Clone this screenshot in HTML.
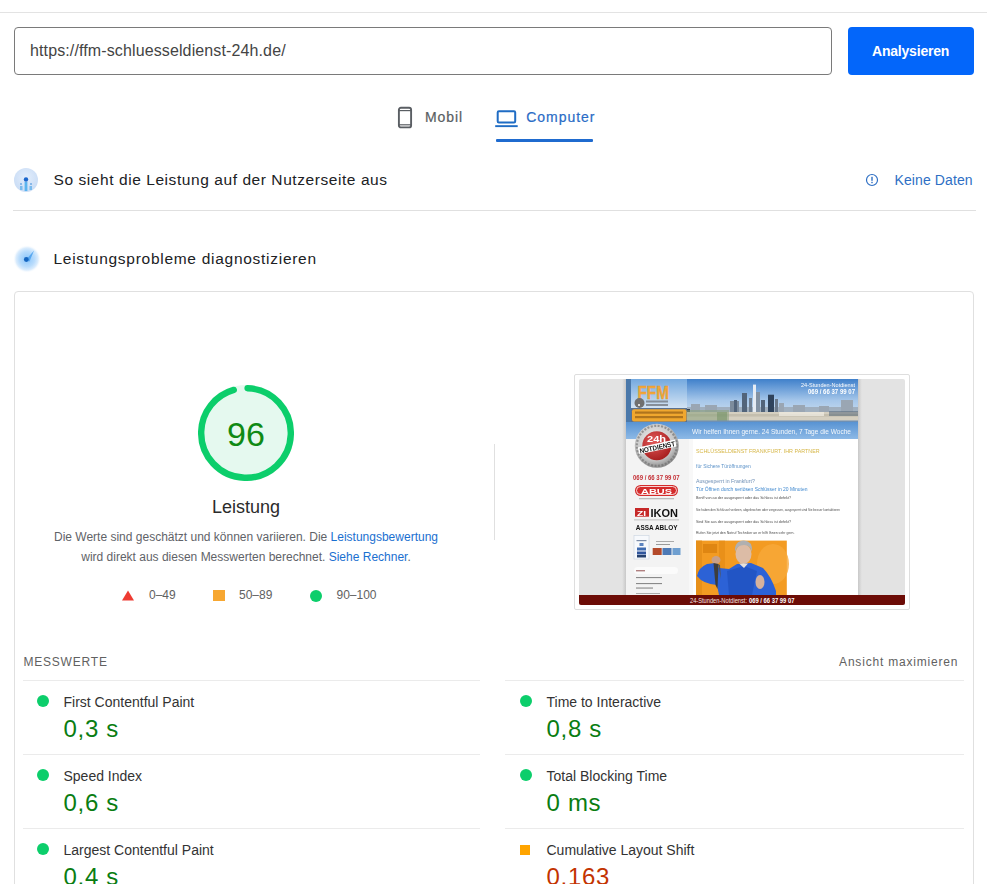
<!DOCTYPE html>
<html><head><meta charset="utf-8">
<style>
html,body{margin:0;padding:0;background:#fff;width:987px;height:884px;overflow:hidden;position:relative;font-family:"Liberation Sans",sans-serif;}
.a{position:absolute;white-space:nowrap;}
.t{position:absolute;white-space:nowrap;line-height:1;}
</style></head><body>
<!-- top line -->
<div class="a" style="left:0;top:12px;width:987px;height:1px;background:#e3e3e3"></div>
<!-- input -->
<div class="a" style="left:14px;top:27px;width:816px;height:46px;border:1px solid #7a7a7a;border-radius:4px;"></div>
<div class="t" style="left:30px;top:43.2px;font-size:16px;color:#444;letter-spacing:0.12px">https://ffm-schluesseldienst-24h.de/</div>
<!-- button -->
<div class="a" style="left:848px;top:27px;width:126px;height:48px;background:#0366fa;border-radius:4px;"></div>
<div class="t" style="left:872px;top:44.2px;font-size:14px;font-weight:bold;color:#fff;letter-spacing:-0.2px">Analysieren</div>

<!-- tabs -->
<svg class="a" style="left:397px;top:106px" width="16" height="23" viewBox="0 0 16 23">
 <rect x="1.9" y="1.8" width="12.2" height="19.6" rx="2" fill="none" stroke="#5a5e63" stroke-width="1.9"/>
 <line x1="2" y1="4.6" x2="14" y2="4.6" stroke="#5a5e63" stroke-width="1.2"/>
 <line x1="2" y1="18.8" x2="14" y2="18.8" stroke="#5a5e63" stroke-width="1.2"/>
</svg>
<div class="t" style="left:425px;top:110.4px;font-size:14px;color:#595d62;letter-spacing:0.9px;-webkit-text-stroke:0.2px #595d62">Mobil</div>
<svg class="a" style="left:494px;top:108px" width="26" height="20" viewBox="0 0 26 20">
 <rect x="3.7" y="3.2" width="17.5" height="11.2" rx="1.2" fill="none" stroke="#1f6cc4" stroke-width="2"/>
 <rect x="1.2" y="17.2" width="22.5" height="1.9" fill="#1f6cc4"/>
</svg>
<div class="t" style="left:526.3px;top:110.4px;font-size:14px;color:#2a6cc6;letter-spacing:0.95px;-webkit-text-stroke:0.2px #2a6cc6">Computer</div>
<div class="a" style="left:496px;top:139px;width:97px;height:3px;background:#1f6bcf;border-radius:1px"></div>

<!-- section 1 -->
<svg class="a" style="left:14px;top:168px" width="24" height="24" viewBox="0 0 24 24">
 <defs><radialGradient id="g1" cx="50%" cy="40%" r="60%"><stop offset="0" stop-color="#e3eefc"/><stop offset="1" stop-color="#c9dcf5"/></radialGradient></defs>
 <circle cx="12" cy="12" r="12" fill="url(#g1)"/>
 <circle cx="12" cy="11.5" r="2.2" fill="#1a66cc"/>
 <rect x="10.6" y="14" width="2.8" height="9" fill="#5ab4ef"/>
 <rect x="6" y="15" width="2" height="2" fill="#8ab8e8"/>
 <rect x="16" y="15" width="2" height="2" fill="#8ab8e8"/>
 <rect x="6" y="18" width="2.5" height="4" fill="#79bbee"/>
 <rect x="15.5" y="18" width="2.5" height="4" fill="#79bbee"/>
</svg>
<div class="t" style="left:53.5px;top:171.8px;font-size:15.5px;color:#202124;letter-spacing:0.57px">So sieht die Leistung auf der Nutzerseite aus</div>
<svg class="a" style="left:865px;top:173px" width="14" height="14" viewBox="0 0 14 14">
 <circle cx="7" cy="7" r="5.5" fill="none" stroke="#2e6fc4" stroke-width="1.2"/>
 <rect x="6.3" y="3.8" width="1.4" height="4" fill="#2e6fc4"/>
 <rect x="6.3" y="8.8" width="1.4" height="1.4" fill="#2e6fc4"/>
</svg>
<div class="t" style="left:894.5px;top:173.4px;font-size:14px;color:#2e6fc4;letter-spacing:0.1px">Keine Daten</div>
<div class="a" style="left:13px;top:210px;width:963px;height:1px;background:#e0e0e0"></div>

<!-- section 2 -->
<svg class="a" style="left:13px;top:245px" width="28" height="28" viewBox="0 0 28 28">
 <defs><radialGradient id="g2" cx="50%" cy="50%" r="50%"><stop offset="0" stop-color="#8cc6fa"/><stop offset="0.55" stop-color="#b9dcfc"/><stop offset="0.8" stop-color="#dcedfd"/><stop offset="1" stop-color="#ffffff" stop-opacity="0"/></radialGradient></defs>
 <circle cx="14" cy="14" r="14" fill="url(#g2)"/>
 <path d="M12.5 15.5 L21 5.5 L16.5 16.5 Z" fill="#58a8f0"/>
 <circle cx="13.3" cy="14.5" r="2.4" fill="#1565c0"/>
</svg>
<div class="t" style="left:53.5px;top:250.9px;font-size:15.5px;color:#202124;letter-spacing:0.72px">Leistungsprobleme diagnostizieren</div>

<!-- card -->
<div class="a" style="left:14px;top:291px;width:958px;height:700px;border:1px solid #e0e0e0;border-radius:4px;"></div>


<!-- gauge -->
<svg class="a" style="left:198px;top:385px" width="96" height="96" viewBox="0 0 120 120">
 <circle cx="60" cy="60" r="56" fill="#0cce6b" stroke="#0cce6b" stroke-width="8" opacity="0.1"/>
 <circle cx="60" cy="60" r="56" fill="none" stroke="#0cce6b" stroke-width="8" stroke-linecap="round" stroke-dasharray="333.78 351.86" transform="rotate(-87.954 60 60)"/>
</svg>
<div class="t" style="left:146px;width:200px;text-align:center;top:417.2px;font-size:34px;color:#108a14">96</div>
<div class="t" style="left:146px;width:200px;text-align:center;top:497.8px;font-size:18px;color:#2b2b2b">Leistung</div>
<div class="t" style="left:46px;width:400px;text-align:center;top:530.8px;font-size:12px;color:#5f6368">Die Werte sind geschätzt und können variieren. Die <span style="color:#1a6fd0">Leistungsbewertung</span></div>
<div class="t" style="left:46px;width:400px;text-align:center;top:550.8px;font-size:12px;color:#5f6368">wird direkt aus diesen Messwerten berechnet. <span style="color:#1a6fd0">Siehe Rechner</span>.</div>
<!-- legend -->
<svg class="a" style="left:122px;top:590px" width="12" height="11" viewBox="0 0 12 11"><path d="M6 0.5 L12 10.5 L0 10.5 Z" fill="#ee3b32"/></svg>
<div class="t" style="left:149px;top:589px;font-size:12px;color:#616161">0–49</div>
<div class="a" style="left:213px;top:590px;width:12px;height:11px;background:#f7a731"></div>
<div class="t" style="left:239px;top:589px;font-size:12px;color:#616161">50–89</div>
<div class="a" style="left:310px;top:589.5px;width:12px;height:12px;border-radius:50%;background:#0cce6b"></div>
<div class="t" style="left:336.5px;top:589px;font-size:12px;color:#616161">90–100</div>
<!-- vertical divider -->
<div class="a" style="left:494px;top:444px;width:1px;height:96px;background:#e0e0e0"></div>
<!-- thumbnail frame -->
<div class="a" style="left:574px;top:374px;width:334px;height:234px;border:1px solid #dedede;border-radius:2px;background:#fff"></div>
<div id="thumb" class="a" style="left:579px;top:379px;width:326px;height:226px;overflow:hidden;border-radius:2px;filter:blur(0.35px)"><svg width="326" height="226" viewBox="0 0 326 226" style="display:block;font-family:'Liberation Sans',sans-serif">
 <defs>
  <linearGradient id="sky" x1="0" y1="0" x2="0" y2="1"><stop offset="0" stop-color="#3f80cb"/><stop offset="0.5" stop-color="#a6c7ea"/><stop offset="1" stop-color="#dbe7f2"/></linearGradient>
  <linearGradient id="logo" x1="0" y1="0" x2="0" y2="1"><stop offset="0" stop-color="#74a9df"/><stop offset="1" stop-color="#d3e3f3"/></linearGradient>
  <linearGradient id="band" x1="0" y1="0" x2="0" y2="1"><stop offset="0" stop-color="#5893d3"/><stop offset="1" stop-color="#8db9e6"/></linearGradient>
  <linearGradient id="shL" x1="0" y1="0" x2="1" y2="0"><stop offset="0" stop-color="#e4e4e4"/><stop offset="1" stop-color="#c8c8c8"/></linearGradient>
  <linearGradient id="shR" x1="0" y1="0" x2="1" y2="0"><stop offset="0" stop-color="#c8c8c8"/><stop offset="1" stop-color="#e4e4e4"/></linearGradient>
  <radialGradient id="silver" cx="45%" cy="40%" r="60%"><stop offset="0" stop-color="#f4f4f4"/><stop offset="0.7" stop-color="#c9c9c9"/><stop offset="1" stop-color="#8d8d8d"/></radialGradient>
  <radialGradient id="redg" cx="40%" cy="35%" r="70%"><stop offset="0" stop-color="#e25a5a"/><stop offset="1" stop-color="#a51d1d"/></radialGradient>
 </defs>
 <rect width="326" height="226" fill="#e3e3e3"/>
 <rect x="43" y="0" width="4" height="216" fill="url(#shL)"/>
 <rect x="279" y="0" width="4" height="216" fill="url(#shR)"/>
 <!-- site body -->
 <rect x="47" y="0" width="232" height="216" fill="#ffffff"/>
 <rect x="47" y="60" width="63" height="156" fill="#f3f3f3"/><rect x="110" y="60" width="4" height="156" fill="#f8f8f8"/>
 <!-- header -->
 <rect x="47" y="0" width="5" height="43" fill="#4a78aa"/>
 <rect x="52" y="0" width="56" height="29" fill="url(#logo)"/>
 <text x="58.5" y="19.8" font-size="19" font-weight="bold" fill="#f2a73a" stroke="#e0962c" stroke-width="0.4" textLength="31.5" lengthAdjust="spacingAndGlyphs">FFM</text>
 <circle cx="60.5" cy="24" r="5" fill="#707070"/><circle cx="60" cy="26" r="1" fill="#fff"/>
 <rect x="67" y="21.5" width="22" height="2" fill="#6f747c" opacity="0.75"/>
 <rect x="67" y="25" width="22" height="2" fill="#6f747c" opacity="0.75"/>
 <rect x="52" y="29" width="56" height="14" fill="#5a7190"/>
 <rect x="53" y="30.2" width="54.5" height="12.2" rx="2" fill="#f0a72e"/>
 <rect x="56" y="32.5" width="48" height="2.2" fill="#7a4a10" opacity="0.55"/>
 <rect x="56" y="37" width="48" height="2.2" fill="#7a4a10" opacity="0.55"/>
 <!-- skyline -->
 <rect x="108" y="0" width="171" height="43" fill="url(#sky)"/>
 <g fill="#9aa6b3">
  <rect x="108" y="28" width="171" height="6" opacity="0.8"/>
  <rect x="112" y="25" width="9" height="9"/>
  <rect x="126" y="26" width="12" height="8"/>
  <rect x="200" y="24" width="5" height="10"/>
  <rect x="214" y="26" width="12" height="8"/>
  <rect x="240" y="27" width="10" height="7"/>
  <rect x="262" y="21" width="12" height="13"/>
 </g>
 <g fill="#52647a">
  <rect x="151" y="22" width="9" height="13" fill="#7d8c9c"/>
  <rect x="155" y="21" width="3" height="14"/>
  <rect x="163" y="14" width="5" height="21"/>
  <rect x="170" y="19" width="3" height="16" fill="#6f7e90"/>
  <rect x="174" y="5.6" width="3" height="29.4" fill="#e6ecf4"/>
  <rect x="177" y="13" width="4" height="22" fill="#8392a3"/>
  <rect x="182" y="21" width="4" height="14"/>
  <rect x="189" y="15.7" width="6" height="19.3" fill="#2f435c"/>
  <rect x="196" y="20" width="3" height="15" fill="#6a798b"/>
  <rect x="108" y="30" width="3" height="6" fill="#33404e"/>
 </g>
 <rect x="108" y="33" width="171" height="9" fill="#d5cfc0"/>
 <rect x="108" y="35" width="171" height="2.5" fill="#b9b2a2" opacity="0.6"/>
 <rect x="108" y="31" width="42" height="11" fill="#8aa07c" opacity="0.55"/>
 <rect x="138" y="33" width="10" height="9" fill="#6f8f62" opacity="0.5"/>
 <rect x="200" y="33" width="45" height="4" fill="#ece8df" opacity="0.8"/>
 <rect x="250" y="32" width="29" height="5" fill="#56687a" opacity="0.55"/>
 <rect x="108" y="41.5" width="171" height="1.5" fill="#6e90b5"/>
 <text x="276" y="8" font-size="6" fill="#ffffff" text-anchor="end" textLength="54" lengthAdjust="spacingAndGlyphs">24-Stunden-Notdienst</text>
 <text x="276" y="15" font-size="6.5" font-weight="bold" fill="#ffffff" text-anchor="end" textLength="47" lengthAdjust="spacingAndGlyphs">069 / 66 37 99 07</text>
 <!-- band -->
 <rect x="47" y="43" width="232" height="17" fill="url(#band)"/>
 <text x="113" y="55" font-size="7.5" fill="#f4f8fc" textLength="159" lengthAdjust="spacingAndGlyphs">Wir helfen Ihnen gerne. 24 Stunden, 7 Tage die Woche</text>
 <!-- badge -->
 <circle cx="77.8" cy="66.8" r="22" fill="url(#silver)"/>
 <circle cx="77.8" cy="66.8" r="20" fill="none" stroke="#6a6a6a" stroke-width="2.2" stroke-dasharray="2 1.5" opacity="0.6"/>
 <circle cx="77.8" cy="66.8" r="14.5" fill="url(#redg)"/>
 <text x="68" y="63" font-size="9" font-weight="bold" fill="#ffffff" textLength="19" lengthAdjust="spacingAndGlyphs">24h</text>
 <g transform="rotate(-12 77.8 67)"><rect x="59" y="64.5" width="38" height="7" fill="#ffffff"/><text x="60" y="70.8" font-size="7" font-weight="bold" fill="#111" textLength="36" lengthAdjust="spacingAndGlyphs">NOTDIENST</text></g>
 <!-- sidebar logos -->
 <text x="54" y="100.7" font-size="6.5" font-weight="bold" fill="#c42f35" textLength="46.7" lengthAdjust="spacingAndGlyphs">069 / 66 37 99 07</text>
 <rect x="56" y="106" width="43" height="11" rx="5.5" fill="#d42b2b"/>
 <rect x="57.5" y="107.5" width="40" height="8" rx="4" fill="none" stroke="#ffffff" stroke-width="0.8"/>
 <text x="62" y="115" font-size="8" font-weight="bold" fill="#ffffff" textLength="31" lengthAdjust="spacingAndGlyphs">ABUS</text>
 <rect x="60" y="119" width="35" height="1.3" fill="#999" opacity="0.6"/>
 <rect x="56" y="129" width="14" height="8.7" fill="#c62828"/>
 <text x="58" y="136.5" font-size="8" font-weight="bold" fill="#ffffff" textLength="9" lengthAdjust="spacingAndGlyphs">ZI</text>
 <text x="71.5" y="137.7" font-size="11" font-weight="bold" fill="#111111" textLength="27.5" lengthAdjust="spacingAndGlyphs">IKON</text>
 <rect x="55" y="140.5" width="45" height="0.8" fill="#888" opacity="0.6"/>
 <text x="56.8" y="151.3" font-size="7.5" font-weight="bold" fill="#111111" textLength="41.7" lengthAdjust="spacingAndGlyphs">ASSA ABLOY</text>
 <rect x="55" y="156.5" width="15" height="23.5" fill="#f7f9fc" stroke="#c9d3e0" stroke-width="0.6"/>
 <rect x="57.5" y="161" width="10" height="1.2" fill="#7a8aa6"/>
 <rect x="60.5" y="164" width="4" height="3" fill="#5b83c0"/>
 <rect x="58" y="168.5" width="9" height="3" fill="#3e6bb0"/>
 <rect x="58" y="172.5" width="9" height="3" fill="#2e559c"/>
 <rect x="58" y="176" width="9" height="2.5" fill="#23406e"/>
 <rect x="77" y="162" width="18" height="1" fill="#aaa"/>
 <rect x="77" y="165" width="14" height="1" fill="#999"/>
 <rect x="73.7" y="169" width="9" height="7" fill="#b44a2a"/>
 <rect x="83.5" y="169" width="9" height="7" fill="#4d79b5"/>
 <rect x="93.5" y="169" width="8" height="7" fill="#6f9fd0"/>
 <rect x="55" y="188" width="44" height="7" rx="3.5" fill="#fbfbfb"/>
 <rect x="57" y="191" width="9" height="1.4" fill="#b08080"/>
 <rect x="57" y="198" width="26" height="1.1" fill="#444" opacity="0.6"/>
 <rect x="57" y="204" width="26" height="1.1" fill="#444" opacity="0.6"/>
 <rect x="57" y="208.5" width="17" height="1.1" fill="#444" opacity="0.6"/>
 <rect x="57" y="214" width="24" height="1" fill="#444" opacity="0.4"/>
 <!-- main content -->
 <text x="117" y="74" font-size="6" fill="#d6b646" textLength="123.6" lengthAdjust="spacingAndGlyphs">SCHLÜSSELDIENST FRANKFURT. IHR PARTNER</text>
 <text x="117" y="88.8" font-size="5.2" fill="#5d93c9" textLength="54.7" lengthAdjust="spacingAndGlyphs">für Sichere Türöffnungen</text>
 <text x="117" y="104" font-size="5.5" fill="#6f8fb5" textLength="58.8" lengthAdjust="spacingAndGlyphs">Ausgesperrt in Frankfurt?</text>
 <text x="117" y="111.5" font-size="5.5" fill="#3f88cf" textLength="111.5" lengthAdjust="spacingAndGlyphs">Tür Öffnen durch seriösen Schlüsser in 20 Minuten</text>
 <g font-size="4.2" fill="#2a2a2a" opacity="0.85">
  <text x="117" y="119.5" textLength="95" lengthAdjust="spacingAndGlyphs">Benff von ao der ausgesperrt oder das Schloss ist defekt?</text>
  <text x="117" y="131.5" textLength="144" lengthAdjust="spacingAndGlyphs">Sie haben den Schlüssel verloren, abgebrochen oder vergessen, ausgesperrt sind Sie besser kontaktieren</text>
  <text x="117" y="143.5" textLength="95" lengthAdjust="spacingAndGlyphs">Sind Sie aus der ausgesperrt oder das Schloss ist defekt?</text>
  <text x="117" y="155" textLength="98.5" lengthAdjust="spacingAndGlyphs">Rufen Sie jetzt den Notruf Techniker an er hilft Ihnen sehr gern.</text>
 </g>
 <!-- orange photo -->
 <rect x="117" y="161.6" width="90.8" height="54.4" fill="#f39b22"/>
 <rect x="124" y="165" width="14" height="9" fill="#d9810f" opacity="0.8"/>
 <rect x="117" y="161.6" width="6" height="54.4" fill="#e7901a"/>
 <rect x="140" y="161.6" width="6" height="54.4" fill="#e48c16" opacity="0.7"/>
 <ellipse cx="194" cy="185" rx="16" ry="20" fill="#f7a93a" opacity="0.8"/>
 <path d="M118 197 Q120 188 128 185 L136 184 L140 189 L150 190 L158 185 L172 184 L184 189 Q192 197 197 212 L197 216 L140 216 L138 206 Q124 205 118 197 Z" fill="#2c62d6"/>
 <path d="M148 192 L165 187 L178 192 L173 216 L150 216 Z" fill="#2153c0" opacity="0.8"/>
 <ellipse cx="164.5" cy="175" rx="8" ry="10" fill="#dcbca6"/>
 <path d="M156 173 Q155 162 165 161.5 Q174 162 173 173 Q171 166 165 166 Q158 166 156 173 Z" fill="#b0b0b0"/>
 <path d="M160 184.5 L169 184.5 L165 189 Z" fill="#e6e1dc"/>
 <ellipse cx="137" cy="181" rx="4.5" ry="4" fill="#c9a088"/>
 <path d="M134.5 184 L136.5 206 L138.5 210 L139.5 185 Z" fill="#3d3d3d"/><path d="M139 185 L142 200 L141 186 Z" fill="#555"/>
 <ellipse cx="181" cy="203" rx="4.5" ry="7" fill="#d6b29c"/>
 <!-- bottom bar -->
 <rect x="0" y="216" width="326" height="10" fill="#6c0c06"/>
 <text x="111" y="224" font-size="7.5" fill="#f4e4e2" textLength="57" lengthAdjust="spacingAndGlyphs">24-Stunden-Notdienst:</text>
 <text x="170" y="224" font-size="7.5" font-weight="bold" fill="#ffffff" textLength="45.5" lengthAdjust="spacingAndGlyphs">069 / 66 37 99 07</text>
</svg></div>

<!-- metrics -->
<div class="t" style="left:23.4px;top:655.8px;font-size:12px;color:#616161;letter-spacing:0.8px">MESSWERTE</div>
<div class="t" style="right:28.8px;top:656px;font-size:12px;color:#616161;letter-spacing:0.8px">Ansicht maximieren</div>
<div class="a" style="left:23px;top:680px;width:457px;height:1px;background:#ebebeb"></div>
<div class="a" style="left:37px;top:694.6px;width:12px;height:12px;border-radius:50%;background:#0cce6b"></div>
<div class="t" style="left:63.5px;top:694.75px;font-size:14px;color:#333">First Contentful Paint</div>
<div class="t" style="left:63.5px;top:717.1px;font-size:24px;color:#0a7d12;letter-spacing:0.7px">0,3 s</div>
<div class="a" style="left:505px;top:680px;width:459px;height:1px;background:#ebebeb"></div>
<div class="a" style="left:520px;top:694.6px;width:12px;height:12px;border-radius:50%;background:#0cce6b"></div>
<div class="t" style="left:546.5px;top:694.75px;font-size:14px;color:#333">Time to Interactive</div>
<div class="t" style="left:546.5px;top:717.1px;font-size:24px;color:#0a7d12;letter-spacing:0.7px">0,8 s</div>
<div class="a" style="left:23px;top:754px;width:457px;height:1px;background:#ebebeb"></div>
<div class="a" style="left:37px;top:768.6px;width:12px;height:12px;border-radius:50%;background:#0cce6b"></div>
<div class="t" style="left:63.5px;top:768.75px;font-size:14px;color:#333">Speed Index</div>
<div class="t" style="left:63.5px;top:791.1px;font-size:24px;color:#0a7d12;letter-spacing:0.7px">0,6 s</div>
<div class="a" style="left:505px;top:754px;width:459px;height:1px;background:#ebebeb"></div>
<div class="a" style="left:520px;top:768.6px;width:12px;height:12px;border-radius:50%;background:#0cce6b"></div>
<div class="t" style="left:546.5px;top:768.75px;font-size:14px;color:#333">Total Blocking Time</div>
<div class="t" style="left:546.5px;top:791.1px;font-size:24px;color:#0a7d12;letter-spacing:0.7px">0 ms</div>
<div class="a" style="left:23px;top:828px;width:457px;height:1px;background:#ebebeb"></div>
<div class="a" style="left:37px;top:842.6px;width:12px;height:12px;border-radius:50%;background:#0cce6b"></div>
<div class="t" style="left:63.5px;top:842.75px;font-size:14px;color:#333">Largest Contentful Paint</div>
<div class="t" style="left:63.5px;top:865.1px;font-size:24px;color:#0a7d12;letter-spacing:0.7px">0,4 s</div>
<div class="a" style="left:505px;top:828px;width:459px;height:1px;background:#ebebeb"></div>
<div class="a" style="left:520px;top:844.5px;width:10px;height:10px;background:#ffa400"></div>
<div class="t" style="left:546.5px;top:842.75px;font-size:14px;color:#333">Cumulative Layout Shift</div>
<div class="t" style="left:546.5px;top:865.1px;font-size:24px;color:#c33300;letter-spacing:0.7px">0,163</div>

</body></html>
